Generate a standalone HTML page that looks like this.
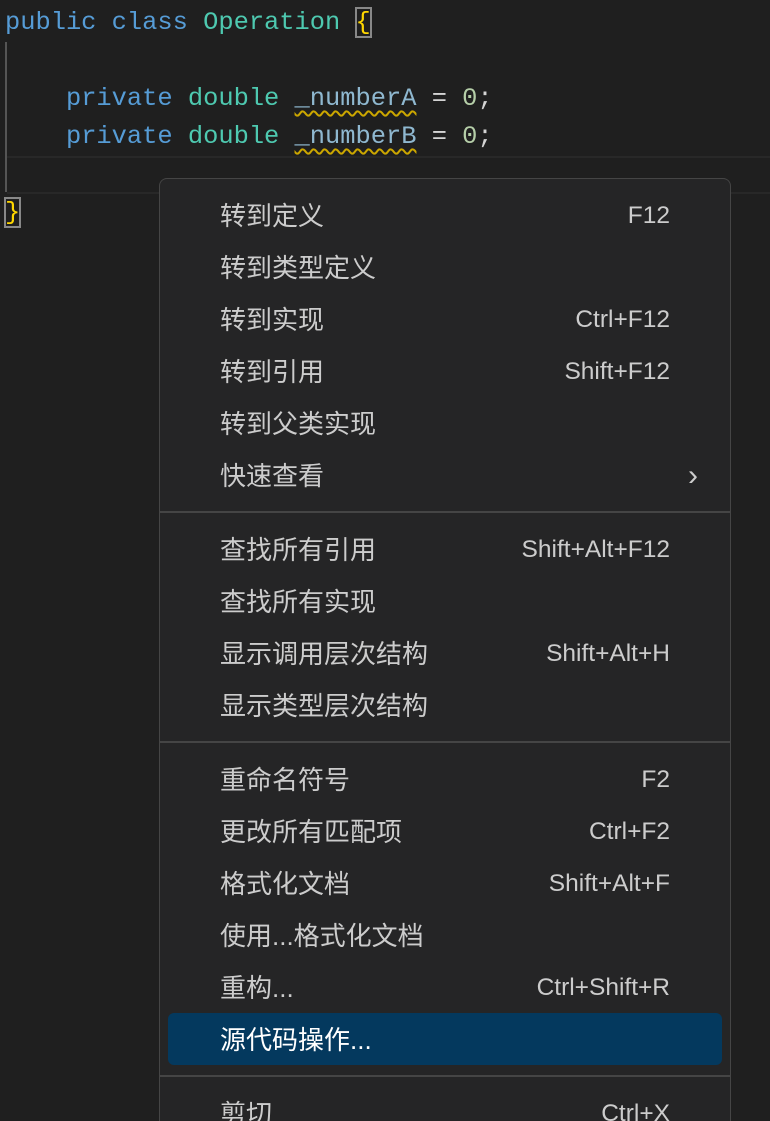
<!DOCTYPE html>
<html style="overflow:hidden;height:1121px"><head><meta charset="utf-8"><style>
body{margin:0;width:770px;height:1121px;background:#1f1f1f;overflow:hidden;position:relative;font-family:"Liberation Sans","Noto Sans CJK SC",sans-serif}
.code{position:absolute;left:5px;font-family:"Liberation Mono","DejaVu Sans Mono",monospace;font-size:25.4px;line-height:38px;white-space:pre;color:#d4d4d4}
.k{color:#569cd6}.t{color:#4ec9b0}.v{color:#8fb8d0;text-decoration:underline wavy #cca700;text-decoration-thickness:1.5px;text-underline-offset:5px}.n{color:#b5cea8}.b{color:#ffd700;outline:2px solid #888;outline-offset:-1px}
.cur{position:absolute;left:7px;right:0;top:156px;height:34px;border-top:2px solid #282828;border-bottom:2px solid #282828}
.guide{position:absolute;left:5px;top:42px;width:2px;height:150px;background:#555}
.menu{position:absolute;left:159px;top:178px;width:572px;height:943px;background:#252526;border:1px solid #454545;border-bottom:none;border-radius:8px 8px 0 0;padding-top:10px;box-sizing:border-box;overflow:hidden}
.it{height:52px;line-height:54px;position:relative;font-size:26px;color:#cccccc;margin:0 8px;border-radius:6px}
.it span{position:absolute;top:0}
.it .l{left:52px}.it .r{right:52px;font-size:24.5px}
.sel{background:#04395e;color:#fff}
.sep{height:2px;background:#454545;margin:10px 0}
</style></head><body>
<div class="cur"></div><div class="guide"></div>
<div class="code" style="top:4px"><span class="k">public</span> <span class="k">class</span> <span class="t">Operation</span> <span class="b">{</span></div>
<div class="code" style="top:80px">    <span class="k">private</span> <span class="t">double</span> <span class="v">_numberA</span> = <span class="n">0</span>;</div>
<div class="code" style="top:118px">    <span class="k">private</span> <span class="t">double</span> <span class="v">_numberB</span> = <span class="n">0</span>;</div>
<div class="code" style="top:194px"><span class="b">}</span></div>
<div class="menu">
<div class="it"><span class="l">转到定义</span><span class="r">F12</span></div>
<div class="it"><span class="l">转到类型定义</span></div>
<div class="it"><span class="l">转到实现</span><span class="r">Ctrl+F12</span></div>
<div class="it"><span class="l">转到引用</span><span class="r">Shift+F12</span></div>
<div class="it"><span class="l">转到父类实现</span></div>
<div class="it"><span class="l">快速查看</span><span class="r" style="right:24px;font-size:30px">&#x203A;</span></div>
<div class="sep"></div>
<div class="it"><span class="l">查找所有引用</span><span class="r">Shift+Alt+F12</span></div>
<div class="it"><span class="l">查找所有实现</span></div>
<div class="it"><span class="l">显示调用层次结构</span><span class="r">Shift+Alt+H</span></div>
<div class="it"><span class="l">显示类型层次结构</span></div>
<div class="sep"></div>
<div class="it"><span class="l">重命名符号</span><span class="r">F2</span></div>
<div class="it"><span class="l">更改所有匹配项</span><span class="r">Ctrl+F2</span></div>
<div class="it"><span class="l">格式化文档</span><span class="r">Shift+Alt+F</span></div>
<div class="it"><span class="l">使用...格式化文档</span></div>
<div class="it"><span class="l">重构...</span><span class="r">Ctrl+Shift+R</span></div>
<div class="it sel"><span class="l">源代码操作...</span></div>
<div class="sep"></div>
<div class="it"><span class="l">剪切</span><span class="r">Ctrl+X</span></div>
</div>
</body></html>
